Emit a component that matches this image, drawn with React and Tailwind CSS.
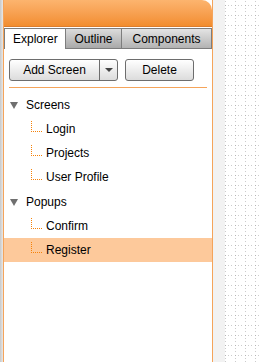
import React from 'react';

const screens = ['Login', 'Projects', 'User Profile'];
const popups = ['Confirm', 'Register'];
const vDots = [0, 2, 4, 6, 8, 10];
const hDots = [2, 4, 6, 8, 10];

function Connector() {
  return (
    <svg width="11" height="11" className="mt-1 shrink-0" shapeRendering="crispEdges">
      {vDots.map((y) => (
        <rect key={'v' + y} x="0" y={y} width="1" height="1" fill="#f5820a" />
      ))}
      {hDots.map((x) => (
        <rect key={'h' + x} x={x} y="10" width="1" height="1" fill="#f5820a" />
      ))}
    </svg>
  );
}

function Group({ label, items, selected }) {
  return (
    <div>
      <div className="flex h-6 items-center pl-[6px]">
        <span className="h-0 w-0 border-x-[4px] border-t-[7px] border-x-transparent border-t-[#6f6f6f]" />
        <span className="ml-2 text-black">{label}</span>
      </div>
      {items.map((it) => (
        <div key={it} className={'flex h-6 pl-[27px] ' + (it === selected ? 'bg-[#fdc99b]' : '')}>
          <Connector />
          <span className="ml-1 self-center text-black">{it}</span>
        </div>
      ))}
    </div>
  );
}

export default function App() {
  return (
    <div className="flex h-[362px] w-[260px] overflow-hidden bg-white text-[12px] leading-none" style={{ fontFamily: '"Liberation Sans", Arial, sans-serif' }}>
      <div className="w-[3px] shrink-0 bg-gradient-to-r from-[#c9c9c9] to-[#e8e8e8]" />

      <div className="flex w-[210px] shrink-0 flex-col border-x border-[#f5a45a]">
        <div className="h-[27px] rounded-tr-[10px] border-b border-[#dd7d2c] bg-gradient-to-b from-[#fcb46e] to-[#f28d2e]" />

        <div className="mt-px flex h-[21px] items-stretch">
          <div className="flex w-[62px] items-center border-x border-t border-[#7d7d7d] bg-white pl-[8px]">Explorer</div>
          <div className="flex w-[56px] items-center justify-center border-y border-r border-[#7d7d7d] bg-gradient-to-b from-[#dcdcdc] to-[#a9a9a9]">Outline</div>
          <div className="flex flex-1 items-center justify-center border-y border-r border-[#7d7d7d] bg-gradient-to-b from-[#e4e4e4] to-[#b3b3b3]">Components</div>
        </div>

        <div className="mt-[10px] flex gap-[7px] pl-[5px]">
          <div className="flex h-[22px] rounded-[3px] border border-[#6d6d6d] bg-gradient-to-b from-white to-[#dcdcdc]">
            <div className="flex w-[90px] items-center justify-center border-r border-[#6d6d6d]">Add Screen</div>
            <div className="flex w-[17px] items-center justify-center">
              <span className="h-0 w-0 border-x-[4px] border-t-[4px] border-x-transparent border-t-[#444]" />
            </div>
          </div>
          <div className="flex h-[22px] w-[69px] items-center justify-center rounded-[3px] border border-[#6d6d6d] bg-gradient-to-b from-white to-[#dcdcdc]">Delete</div>
        </div>

        <div className="mx-[5px] mt-[6px] h-px bg-[#f5a45a]" />

        <div className="mt-[5px]">
          <Group label="Screens" items={screens} />
          <div className="h-px" />
          <Group label="Popups" items={popups} selected="Register" />
        </div>
      </div>

      <div className="w-[12px] shrink-0 bg-[#f2f2f2]" />

      <div className="flex-1">
        <svg width="35" height="362" className="block">
          <defs>
            <pattern id="grid" x="0" y="5" width="10" height="10" patternUnits="userSpaceOnUse">
              <rect x="0" y="0" width="1" height="1" fill="#b4b4b4" />
              <rect x="3" y="0" width="1" height="1" fill="#cccccc" />
              <rect x="6" y="0" width="1" height="1" fill="#cccccc" />
              <rect x="0" y="3" width="1" height="1" fill="#cccccc" />
              <rect x="0" y="6" width="1" height="1" fill="#cccccc" />
            </pattern>
          </defs>
          <rect x="0" y="0" width="35" height="362" fill="url(#grid)" />
        </svg>
      </div>
    </div>
  );
}
